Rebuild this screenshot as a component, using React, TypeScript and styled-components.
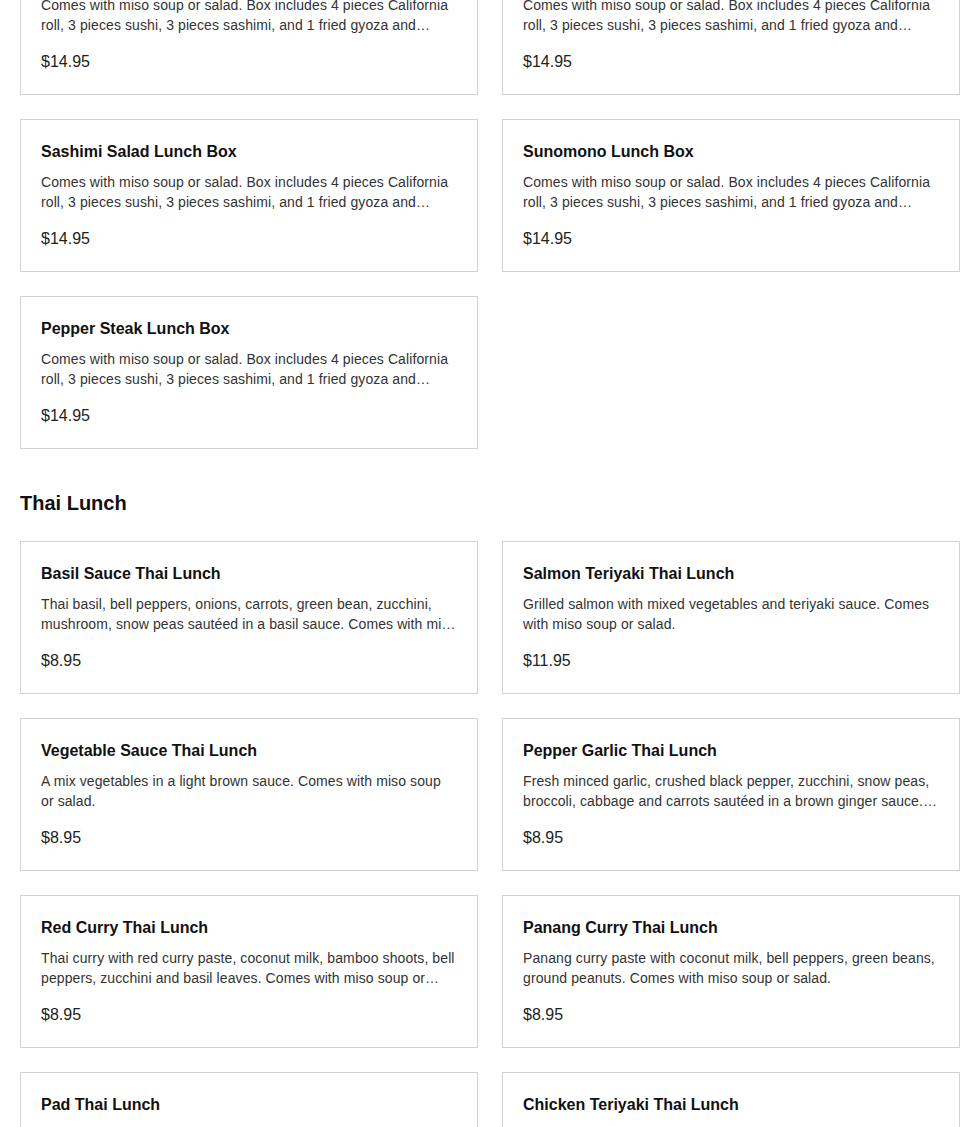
import * as React from 'react';
import styled, { createGlobalStyle } from 'styled-components';

const GlobalStyle = createGlobalStyle`
	html, body {
		margin: 0;
		padding: 0;
		background: #fff;
		overflow: hidden;
	}
	body {
		font-family: 'Liberation Sans', Arial, sans-serif;
		color: #222;
	}
`;

interface Dish {
	name: string;
	description: string;
	price: string;
}

const boxText = 'Comes with miso soup or salad. Box includes 4 pieces California roll, 3 pieces sushi, 3 pieces sashimi, and 1 fried gyoza and shrimp tempura. Served with rice.';

const lunchBoxes: Dish[] = [
	{ name: 'Chicken Teriyaki Lunch Box', description: boxText, price: '$14.95' },
	{ name: 'Beef Teriyaki Lunch Box', description: boxText, price: '$14.95' },
	{ name: 'Sashimi Salad Lunch Box', description: boxText, price: '$14.95' },
	{ name: 'Sunomono Lunch Box', description: boxText, price: '$14.95' },
	{ name: 'Pepper Steak Lunch Box', description: boxText, price: '$14.95' },
];

const thaiLunch: Dish[] = [
	{
		name: 'Basil Sauce Thai Lunch',
		description: 'Thai basil, bell peppers, onions, carrots, green bean, zucchini, mushroom, snow peas sautéed in a basil sauce. Comes with miso soup or salad.',
		price: '$8.95',
	},
	{
		name: 'Salmon Teriyaki Thai Lunch',
		description: 'Grilled salmon with mixed vegetables and teriyaki sauce. Comes with miso soup or salad.',
		price: '$11.95',
	},
	{
		name: 'Vegetable Sauce Thai Lunch',
		description: 'A mix vegetables in a light brown sauce. Comes with miso soup or salad.',
		price: '$8.95',
	},
	{
		name: 'Pepper Garlic Thai Lunch',
		description: 'Fresh minced garlic, crushed black pepper, zucchini, snow peas, broccoli, cabbage and carrots sautéed in a brown ginger sauce. Comes with miso soup or salad.',
		price: '$8.95',
	},
	{
		name: 'Red Curry Thai Lunch',
		description: 'Thai curry with red curry paste, coconut milk, bamboo shoots, bell peppers, zucchini and basil leaves. Comes with miso soup or salad.',
		price: '$8.95',
	},
	{
		name: 'Panang Curry Thai Lunch',
		description: 'Panang curry paste with coconut milk, bell peppers, green beans, ground peanuts. Comes with miso soup or salad.',
		price: '$8.95',
	},
	{
		name: 'Pad Thai Lunch',
		description: 'Rice noodles stir-fried with egg, bean sprouts, green onions and crushed peanuts. Comes with miso soup or salad.',
		price: '$8.95',
	},
	{
		name: 'Chicken Teriyaki Thai Lunch',
		description: 'Grilled chicken with mixed vegetables and teriyaki sauce. Comes with miso soup or salad.',
		price: '$8.95',
	},
];

const Page = styled.div`
	padding: 0 5px 0 20px;
	width: 940px;
`;

// the first section starts above the fold (page is scrolled)
const Section = styled.section<{ $offset?: number }>`
	margin-top: ${p => p.$offset || 0}px;
`;

const SectionTitle = styled.h2`
	margin: 42px 0 26px;
	font-size: 20px;
	line-height: 24px;
	font-weight: 700;
	color: #111;
`;

const Grid = styled.div`
	display: grid;
	grid-template-columns: 458px 458px;
	gap: 24px;
`;

const Card = styled.div`
	border: 1px solid #d2d2d2;
	padding: 20px;
	background: #fff;
	height: 153px;
	box-sizing: border-box;
`;

const Name = styled.h3`
	margin: 0 0 8px;
	font-size: 16px;
	line-height: 24px;
	font-weight: 700;
	color: #111;
`;

const Description = styled.p`
	margin: 0;
	font-size: 14px;
	line-height: 20px;
	letter-spacing: 0.1px;
	color: #333;
	display: -webkit-box;
	-webkit-box-orient: vertical;
	-webkit-line-clamp: 2;
	overflow: hidden;
`;

const Price = styled.div`
	margin-top: 16px;
	font-size: 16px;
	line-height: 22px;
	color: #222;
`;

function DishCard({ dish }: { dish: Dish }) {
	return (
		<Card>
			<Name>{dish.name}</Name>
			<Description>{dish.description}</Description>
			<Price>{dish.price}</Price>
		</Card>
	);
}

export default function App() {
	return (
		<Page>
			<GlobalStyle />
			<Section $offset={-58}>
				<Grid>
					{lunchBoxes.map(d => <DishCard key={d.name} dish={d} />)}
				</Grid>
			</Section>
			<Section>
				<SectionTitle>Thai Lunch</SectionTitle>
				<Grid>
					{thaiLunch.map(d => <DishCard key={d.name} dish={d} />)}
				</Grid>
			</Section>
		</Page>
	);
}
